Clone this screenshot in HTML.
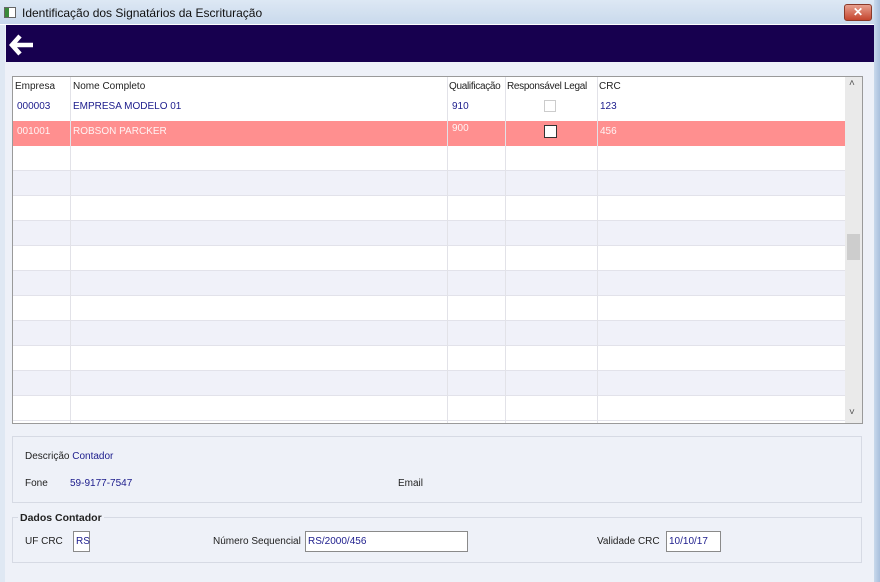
<!DOCTYPE html>
<html><head><meta charset="utf-8"><style>
*{margin:0;padding:0;box-sizing:border-box}
body{width:880px;height:582px;overflow:hidden;font-family:"Liberation Sans",sans-serif;font-size:10px;background:#eef1f8;position:relative;color:#222}
.a{position:absolute}
.title{left:0;top:0;width:880px;height:25px;background:linear-gradient(#dde8f4,#c9d9ec);border-bottom:1px solid #fff}
.band{left:6px;top:25px;width:868px;height:37px;background:#17004f}
.frame{right:0;top:0;width:6px;height:582px;background:linear-gradient(90deg,#c9d9ec,#a9c0dc)}
.frameL{left:0;top:25px;width:5px;height:557px;background:#dfe8f3}
.tbl{left:12px;top:76px;width:851px;height:348px;background:#fff;border:1px solid #9a9a9a;overflow:hidden}
.row{position:absolute;left:0;width:832px;height:25px;border-bottom:1px solid #e2e2ea}
.vl{position:absolute;top:0;width:1px;height:348px;background:#e2e2e8}
.t{position:absolute;white-space:nowrap}
.blue{color:#1c1c8c}
.panel{border:1px solid #d6dae4;background:#eef1f8}
.inp{background:#fff;border:1px solid #8a8a8a;color:#1c1c8c;padding:3px 2px;height:21px;line-height:14px}
</style></head><body>
<div class="a title"></div>
<div class="a" style="left:4px;top:7px;width:12px;height:11px;border:1px solid #666;background:linear-gradient(90deg,#3a8a3a 40%,#fff 40%)"></div>
<div class="a" style="left:22px;top:6px;font-size:12px;color:#111">Identificação dos Signatários da Escrituração</div>
<div class="a" style="left:844px;top:4px;width:28px;height:17px;border-radius:3px;background:linear-gradient(#e8a08f,#c4452e);border:1px solid #8a3a2a;color:#fff;font-weight:bold;font-size:12px;text-align:center;line-height:15px">✕</div>
<div class="a frameL"></div>
<div class="a frame"></div>
<div class="a band"></div>
<svg class="a" style="left:8px;top:33px" width="26" height="24" viewBox="0 0 26 24"><path d="M12 3 L4 12 L12 21 M4 12 H25" stroke="#fff" stroke-width="4.5" fill="none"/></svg>
<div class="a tbl">
 <div class="row" style="top:20px;height:24px;border:none"></div>
 <div class="row" style="top:44px;background:#ff8f8f;border:none"></div>
 <div class="row" style="top:69px"></div>
 <div class="row" style="top:94px;background:#f0f1f9"></div>
 <div class="row" style="top:119px"></div>
 <div class="row" style="top:144px;background:#f0f1f9"></div>
 <div class="row" style="top:169px"></div>
 <div class="row" style="top:194px;background:#f0f1f9"></div>
 <div class="row" style="top:219px"></div>
 <div class="row" style="top:244px;background:#f0f1f9"></div>
 <div class="row" style="top:269px"></div>
 <div class="row" style="top:294px;background:#f0f1f9"></div>
 <div class="row" style="top:319px"></div>
 <div class="vl" style="left:57px"></div><div class="vl" style="left:434px"></div><div class="vl" style="left:492px"></div><div class="vl" style="left:584px"></div>
 <div class="t" style="left:2px;top:4px">Empresa</div>
 <div class="t" style="left:60px;top:4px">Nome Completo</div>
 <div class="t" style="left:436px;top:4px;letter-spacing:-0.3px">Qualificação</div>
 <div class="t" style="left:494px;top:4px;letter-spacing:-0.3px">Responsável Legal</div>
 <div class="t" style="left:586px;top:4px">CRC</div>
 <div class="t blue" style="left:4px;top:24px">000003</div>
 <div class="t blue" style="left:60px;top:24px">EMPRESA MODELO 01</div>
 <div class="t blue" style="left:439px;top:24px">910</div>
 <div class="t" style="left:531px;top:23px;width:12px;height:12px;border:1px solid #ccc;background:#fff"></div>
 <div class="t blue" style="left:587px;top:24px">123</div>
 <div class="t" style="left:4px;top:49px;color:#fff4f4">001001</div>
 <div class="t" style="left:60px;top:49px;color:#fff4f4">ROBSON PARCKER</div>
 <div class="t" style="left:439px;top:46px;color:#fff4f4">900</div>
 <div class="t" style="left:531px;top:48px;width:13px;height:13px;border:1px solid #333;background:#fff"></div>
 <div class="t" style="left:587px;top:49px;color:#fff4f4">456</div>
 <div class="t" style="left:832px;top:0;width:18px;height:347px;background:#eaeaea"></div>
 <div class="t" style="left:834px;top:157px;width:13px;height:26px;background:#cdcdcd"></div>
 <div class="t" style="left:836px;top:1px;font-size:10px;color:#555">˄</div>
 <div class="t" style="left:836px;top:330px;font-size:10px;color:#555">˅</div>
</div>
<div class="a panel" style="left:12px;top:436px;width:850px;height:67px"></div>
<div class="a" style="left:25px;top:451px">Descrição <span class="blue">Contador</span></div>
<div class="a" style="left:25px;top:478px">Fone</div>
<div class="a blue" style="left:70px;top:478px">59-9177-7547</div>
<div class="a" style="left:398px;top:478px">Email</div>
<div class="a panel" style="left:12px;top:517px;width:850px;height:46px"></div>
<div class="a" style="left:18px;top:512px;font-weight:bold;font-size:10.5px;background:#eef1f8;padding:0 2px">Dados Contador</div>
<div class="a" style="left:25px;top:536px">UF CRC</div>
<div class="a inp" style="left:73px;top:531px;width:17px">RS</div>
<div class="a" style="left:213px;top:536px">Número Sequencial</div>
<div class="a inp" style="left:305px;top:531px;width:163px">RS/2000/456</div>
<div class="a" style="left:597px;top:536px">Validade CRC</div>
<div class="a inp" style="left:666px;top:531px;width:55px">10/10/17</div>
</body></html>
